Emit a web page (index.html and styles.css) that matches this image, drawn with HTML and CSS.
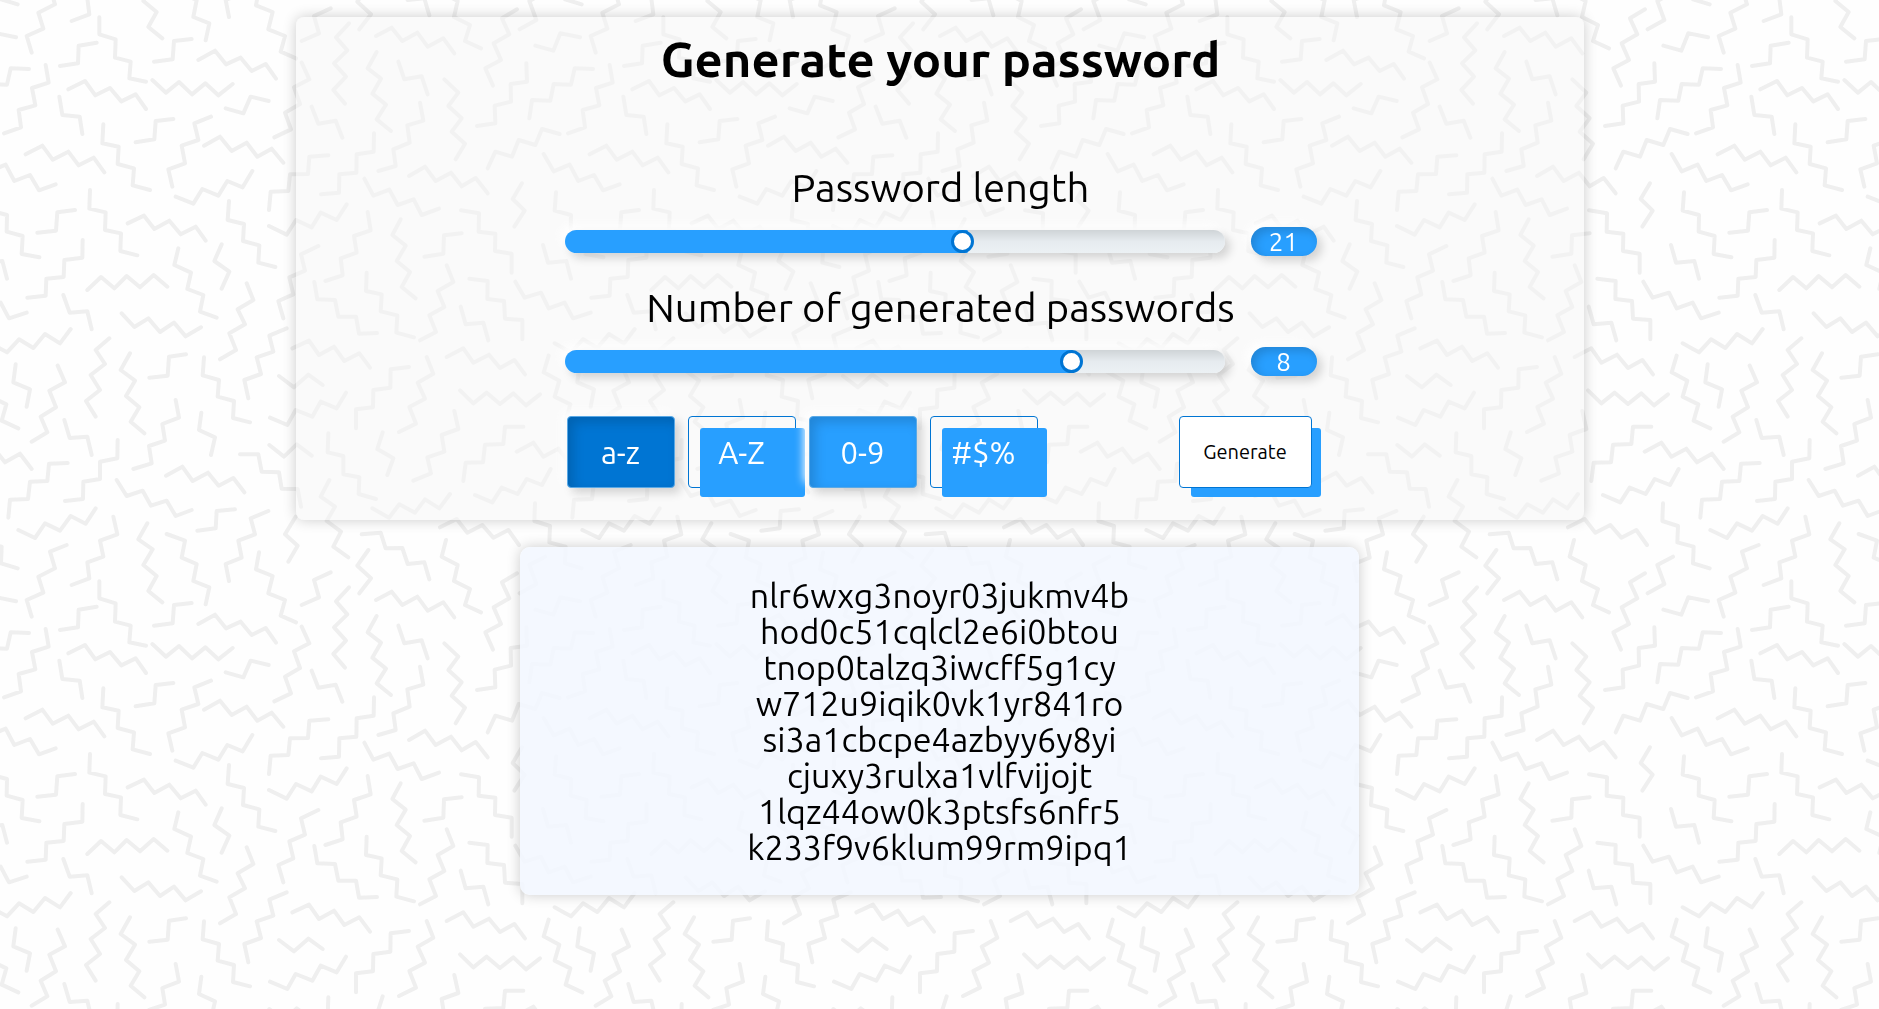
FILE: index.html
```html
<!DOCTYPE html>
<html lang="en">
<head>
<meta charset="utf-8">
<meta name="viewport" content="width=device-width, initial-scale=1">
<title>Generate your password</title>
<link rel="stylesheet" href="styles.css">
</head>
<body>
<svg class="backdrop" aria-hidden="true">
  <defs>
    <pattern id="zigzag" width="1692" height="1692" patternUnits="userSpaceOnUse" patternTransform="scale(0.333333)">
      <g id="strokes">
        <path d="M180 198L234 190 236 137 290 128M298 52L298 103 347 118 345 173 392 185 388 235 438 245M462 185L518 178 522 123 575 117M595 180L645 152 678 193 722 173 755 213 797 192 828 236M205 268L255 243 286 286 330 264 364 304 407 283 438 327M457 240L498 278 537 246 576 283 616 250 655 286 698 252M677 325L730 340 752 290 806 303M-86 137L-32 152 -11 100 48 112M-104 355L-96 300 -41 302 -31 252 21 254 32 205 87 207M137 195L146 248 96 264 106 316 56 330 63 382 12 400M178 290L187 345 239 350 247 402M310 373L307 430 356 440 353 492 402 505 398 556 450 570M407 427L463 418 467 363 520 357M633 350L583 370 595 420 545 437 555 490 505 508 517 560M612 437L660 410 695 453 740 428 772 470 815 446 850 488M77 463L127 437 158 479 205 455 236 496 281 473 313 517M-61 462L-31 514 17 494 43 543 90 525 117 571 167 553M527 590L580 611 607 567 655 587 682 543 728 562 757 513M270 570L268 626 317 637 315 690 363 700 361 753 412 766M112 698L168 692 172 637 225 630M383 670L432 647 463 687 508 662 542 703 587 680 617 722M-24 577L-28 632 21 645 20 695 68 708 65 762 118 772M687 603L683 660 732 672 729 723 778 736 775 788 826 801M248 720L247 773 193 780 191 831 139 836 137 887 82 893M-63 735L-48 788 7 783 21 836M262 870L303 831 343 865 380 828 420 862 461 825 502 860M535 745L523 795 573 818 562 867 610 885 600 935 650 953M665 733L643 783 688 815 665 866M760 900L713 928 735 973 688 1000 708 1050 660 1078M740 850L760 900M-146 845L-118 893 -69 878 -46 925 2 908 27 955 80 938M190 885L209 938 262 934 275 988M-28 1030L21 1057 57 1018 100 1044 135 1002 180 1030 212 987M-46 1067L-61 1117 -14 1142 -28 1190 19 1213 5 1262 55 1285"/>
        <path transform="translate(0 900)" d="M200 735L150 755 165 805 115 830 130 878 80 900 95 950M340 650L352 703 300 722 310 770 262 787 268 835 215 855M442 670L415 718 458 748 430 795 470 828 445 873 487 907M500 702L555 722 545 773 590 792 580 843 628 862 617 913M805 633L752 655 765 703 715 722 725 773 677 792 687 843M777 757L768 808 818 828 805 880 855 900 842 947 888 967M365 40L403 81 445 55 480 96 522 68 557 109 603 82M328 115L287 150 315 192 272 225 300 270 258 303 287 350M390 160L362 210 405 242 378 288 418 322 392 365 433 400M448 233L503 227 507 170 558 163M612 172L608 226 657 240 653 290 702 303 699 354 750 367M860 85L808 107 820 155 770 172 783 222 733 240 745 295M47 193L40 247 90 268 80 320M173 197L195 247 148 272 168 322 122 350 142 397 95 425M193 360L209 414 262 410 275 465M604 338L597 390 645 412 633 465M527 300L537 353 487 372 495 422 447 438 455 490 400 507M353 420L352 475 300 485 300 537 250 545 249 597 195 603M203 489L147 491 142 543 90 545 84 597 30 599 25 653M498 527L547 500 578 543 624 518 656 557 700 534 733 577M350 540L380 588 428 572 453 617 500 602 527 648 575 630M720 463L775 463 785 515 837 517 845 566 893 567 903 620M55 690L105 714 135 670 180 692 212 648 257 671 287 625M592 692L647 685 650 633 705 628M837 228L882 262 925 224 968 255M877 145L927 122 957 165 1002 140 1033 183 1078 160 1110 203M810 353L862 375 887 330 937 350 962 305 1010 325 1038 278M808 435L852 470 890 433 935 467M887 650L855 703 893 737 865 785"/>
        <path d="M992 25L942 48 957 100 905 123M905 188L928 238 882 262 900 312 855 338 873 388 823 412M935 320L955 371 1007 362 1027 413M985 466L928 470 924 522 870 523 865 573 812 575 807 630M807 678L860 704 888 660 935 682 962 638 1010 660 1040 613M955 738L903 763 915 812 868 832 880 883 835 903 850 955M943 846L952 898 1005 900 1015 950 1068 950 1077 1001 1131 999M1148 1297L1132 1347 1180 1375 1162 1425M1363 1233L1375 1287 1325 1305 1333 1355 1282 1372 1293 1420 1240 1442M1635 1670L1588 1695 1609 1752 1559 1780"/>
        <path transform="translate(900 -12)" d="M147 82L108 124 142 163 102 202 138 242 100 282 135 323M230 168L203 217 243 248 217 293 258 326 230 370 273 405M228 120L275 95 307 135 352 110 383 152 430 127 463 172M295 197L313 250 365 241 383 295M433 250L475 290 445 330 485 367 455 407 495 443 467 490M360 320L370 374 322 388 329 440 280 460 287 510 235 525M222 412L221 467 170 475 169 530 118 535 117 590 63 595M327 540L375 512 407 555 453 530 485 571 527 546 563 592M193 548L220 599 268 581 293 627 341 610 365 657 417 638M203 648L212 703 162 720 170 770 122 787 128 838 76 855M302 670L277 717 317 749 290 795 330 828 305 873 347 907M373 782L430 773 432 718 485 712M483 643L537 652 536 707 586 713 585 765 635 773 635 830M200 830L198 885 245 895 242 946 292 958 289 1010 342 1024M440 808L460 858 413 885 433 933 388 958 408 1008 360 1033M508 848L563 855 562 909 612 915 615 968 667 972 667 1030M482 932L497 985 550 980 565 1033M440 1083L490 1057 520 1100 567 1076 600 1116 643 1092 675 1135M480 1183L520 1222 560 1190 600 1224 640 1192 678 1228 720 1195M380 1083L400 1133 353 1160 375 1208 328 1233 348 1283 297 1308M327 1113L272 1120 271 1175 220 1182 219 1234 168 1240 168 1297"/>
        <path transform="translate(900 1260)" d="M85 40L83 97 130 108 130 163 178 172 176 222 228 237M670 20L615 20 610 72 555 74 549 127 497 128 490 183M525 225L577 247 605 203 653 222 680 177 726 195 752 147M217 265L267 293 298 253 345 278 375 238 418 265 450 222M88 180L62 230 105 260 80 303 123 335 100 380 145 412M185 343L242 338 257 385 307 384 323 432 373 427 388 478M205 390L172 437 213 475 178 520M420 322L470 297 502 338 547 315 580 353 625 330 657 375M438 360L425 410 473 435 462 483 510 507 495 555 543 577M650 95L700 68 730 110 775 86 807 127 852 101 887 147M705 250L703 303 750 318 748 367 797 380 795 430 845 445"/>
        <path transform="translate(1356 0)" d="M195 28L150 55 172 103 125 130 147 180 100 205 123 257M75 378L130 370 128 317 177 305 176 252 225 245 223 190M107 505L130 455 180 470 200 420 250 435 270 387 323 402M210 550L182 597 218 632 187 680"/>
      </g>
      <use href="#strokes" x="1692"/>
      <use href="#strokes" x="-1692"/>
      <use href="#strokes" y="-1692"/>
      <use href="#strokes" x="-1692" y="-1692"/>
    </pattern>
  </defs>
  <rect width="100%" height="100%" fill="url(#zigzag)" stroke="none"/>
</svg>

<main class="page">
  <form class="panel">
    <h1 class="title">Generate your password</h1>

    <div class="controls">
      <div class="field">
        <label class="field-label" for="length">Password length</label>
        <div class="field-row">
          <input class="slider" id="length" type="range" min="4" max="32" value="21" style="--fill: 61%">
          <output class="badge" for="length">21</output>
        </div>
      </div>

      <div class="field">
        <label class="field-label" for="count">Number of generated passwords</label>
        <div class="field-row">
          <input class="slider" id="count" type="range" min="1" max="10" value="8" style="--fill: 77%">
          <output class="badge" for="count">8</output>
        </div>
      </div>

      <div class="actions">
        <div class="options">
          <label class="option option-active"><input type="checkbox" checked><span>a-z</span></label>
          <label class="option"><input type="checkbox"><span>A-Z</span></label>
          <label class="option"><input type="checkbox" checked><span>0-9</span></label>
          <label class="option"><input type="checkbox"><span>#$%</span></label>
        </div>
        <button class="generate" type="button">Generate</button>
      </div>
    </div>
  </form>

  <ul class="results">
    <li>nlr6wxg3noyr03jukmv4b</li>
    <li>hod0c51cqlcl2e6i0btou</li>
    <li>tnop0talzq3iwcff5g1cy</li>
    <li>w712u9iqik0vk1yr841ro</li>
    <li>si3a1cbcpe4azbyy6y8yi</li>
    <li>cjuxy3rulxa1vlfvijojt</li>
    <li>1lqz44ow0k3ptsfs6nfr5</li>
    <li>k233f9v6klum99rm9ipq1</li>
  </ul>
</main>
</body>
</html>
```
FILE: styles.css
```css
:root {
  --blue: #289fff;
  --blue-dark: #0075d3;
  --raised: 5px 5px 10px rgba(0, 0, 0, 0.16), -5px -5px 10px #fff;
}

* {
  box-sizing: border-box;
}

body {
  margin: 0;
  min-height: 100vh;
  background: #fefefe;
  color: #000;
  font-family: Ubuntu, "Noto Sans", sans-serif;
}

.backdrop {
  position: fixed;
  inset: 0;
  z-index: -1;
  width: 100%;
  height: 100%;
  fill: none;
  stroke: #efefef;
  stroke-width: 12;
  stroke-linecap: round;
  stroke-linejoin: round;
}

.page {
  display: flex;
  flex-direction: column;
  align-items: center;
  gap: 27px;
  padding: 17px 16px;
}

.panel {
  width: 100%;
  max-width: 1288px;
  padding: 14px 16px 32px 18px;
  border-radius: 8px;
  background: rgba(245, 245, 245, 0.5);
  box-shadow: 0 0 14px rgba(0, 0, 0, 0.2);
}

.title {
  margin: 0 0 69px;
  font-size: 49px;
  line-height: 56px;
  text-align: center;
}

.controls {
  width: 100%;
  max-width: 752px;
  margin: 0 auto;
}

.field {
  height: 120px;
}

.field-label {
  display: block;
  margin-bottom: 4px;
  font-size: 40px;
  line-height: 64px;
  text-align: center;
}

.field-row {
  display: flex;
  align-items: center;
  gap: 26px;
  height: 34px;
}

.slider {
  appearance: none;
  flex: 1;
  min-width: 0;
  height: 23px;
  margin: 0;
  border-radius: 12px;
  background:
    linear-gradient(var(--blue), var(--blue)) 0 0 / var(--fill) 100% no-repeat,
    linear-gradient(#cfd4d7, #e6ebef 50%, #ecf1f4);
  box-shadow: var(--raised);
}

.slider::-webkit-slider-thumb {
  appearance: none;
  width: 23px;
  height: 23px;
  border: 3px solid var(--blue-dark);
  border-radius: 50%;
  background: #fff;
}

.badge {
  width: 66px;
  height: 29px;
  border-radius: 15px;
  background: var(--blue);
  box-shadow: var(--raised), inset 4px 4px 10px rgba(0, 0, 0, 0.16);
  color: #fff;
  font-size: 26px;
  line-height: 29px;
  text-align: center;
}

.actions {
  display: flex;
  justify-content: space-between;
  padding: 20px 5px 0 2px;
}

.options {
  display: flex;
  gap: 13px;
}

.option {
  position: relative;
  display: grid;
  place-items: center;
  width: 108px;
  height: 72px;
  color: #fff;
  font-size: 31px;
  cursor: pointer;
}

.option input {
  appearance: none;
  grid-area: 1 / 1;
  place-self: stretch;
  margin: 0;
  border: 1px solid var(--blue-dark);
  border-radius: 4px;
}

.option span {
  z-index: 1;
  grid-area: 1 / 1;
}

.option input:checked {
  border-color: #5aa9e6;
  background: var(--blue);
  box-shadow: var(--raised), inset 5px 5px 12px rgba(0, 0, 0, 0.16);
}

.option-active input:checked {
  background: var(--blue-dark);
}

.option:has(input:not(:checked))::after,
.generate::after {
  content: "";
  position: absolute;
  inset: 12px -9px -9px 12px;
  border-radius: 3px;
  background: var(--blue);
}

.generate {
  position: relative;
  z-index: 0;
  width: 133px;
  height: 72px;
  padding: 0;
  border: 0;
  background: none;
  color: #000;
  font: 20px/70px Ubuntu, "Noto Sans", sans-serif;
  cursor: pointer;
}

.generate::before {
  content: "";
  position: absolute;
  inset: 0;
  z-index: -1;
  border: 1px solid var(--blue-dark);
  border-radius: 4px;
  background: #fff;
}

.generate::after {
  z-index: -2;
}

.results {
  width: 100%;
  max-width: 839px;
  margin: 0;
  padding: 30px;
  border-radius: 10px;
  background: rgba(242, 247, 255, 0.85);
  box-shadow: 0 0 14px rgba(0, 0, 0, 0.2);
  font-size: 34px;
  line-height: 36px;
  list-style: none;
  text-align: center;
}
```
